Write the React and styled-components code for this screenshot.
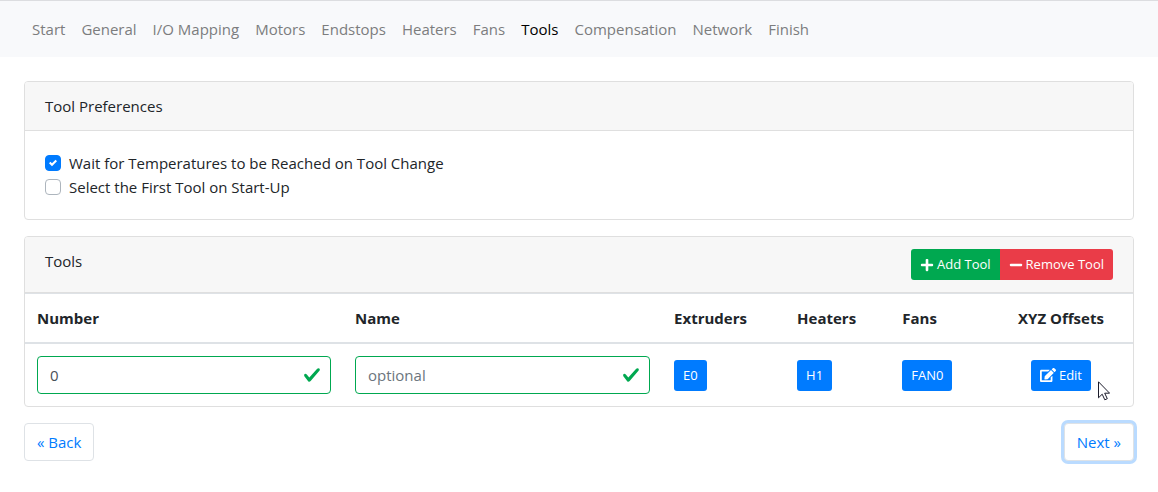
import React, { useState } from 'react'
import styled, { createGlobalStyle } from 'styled-components'
import { FaEdit, FaMinus, FaPlus } from 'react-icons/fa'

const steps = ['Start', 'General', 'I/O Mapping', 'Motors', 'Endstops', 'Heaters', 'Fans', 'Tools', 'Compensation', 'Network', 'Finish']

const CheckOption = ({ id, label, checked, onChange }) => (
    <Option>
        <Box>
            <input id={id} type="checkbox" checked={checked} onChange={(e) => onChange(e.target.checked)} />
            {checked && (
                <svg viewBox="0 0 8 8" aria-hidden="true">
                    <path fill="#fff" d="M6.564.75l-3.59 3.612-1.538-1.55L0 4.26 2.974 7.25 8 2.193z" />
                </svg>
            )}
        </Box>
        <label htmlFor={id}>{label}</label>
    </Option>
)

const ValidInput = (props) => (
    <Field>
        <input {...props} />
        <svg viewBox="0 0 8 8" aria-hidden="true">
            <path fill="#00a850" d="M2.3 6.73L.6 4.53c-.4-1.04.46-1.4 1.1-.8l1.1 1.4 3.4-3.8c.6-.63 1.6-.27 1.2.7l-4 4.6c-.43.5-.8.4-1.1.1z" />
        </svg>
    </Field>
)

const App = () => {
    const [wait, setWait] = useState(true)
    const [selectFirst, setSelectFirst] = useState(false)
    const [number, setNumber] = useState('0')
    const [name, setName] = useState('')

    return (
        <>
            <GlobalStyle />
            <Nav>
                {steps.map((step) => (
                    <NavLink key={step} href="#" $active={step === 'Tools'}>{step}</NavLink>
                ))}
            </Nav>
            <Main>
                <Card>
                    <CardHeader>Tool Preferences</CardHeader>
                    <CardBody>
                        <CheckOption id="wait" label="Wait for Temperatures to be Reached on Tool Change" checked={wait} onChange={setWait} />
                        <CheckOption id="first" label="Select the First Tool on Start-Up" checked={selectFirst} onChange={setSelectFirst} />
                    </CardBody>
                </Card>
                <Card>
                    <CardHeader>
                        <span>Tools</span>
                        <ButtonGroup>
                            <SmallButton $color="#00a850"><FaPlus />Add Tool</SmallButton>
                            <SmallButton $color="#ea3c48"><FaMinus />Remove Tool</SmallButton>
                        </ButtonGroup>
                    </CardHeader>
                    <Table>
                        <colgroup>
                            <Col $width="28.7%" />
                            <Col $width="28.8%" />
                            <Col $width="11.1%" />
                            <Col $width="9.5%" />
                            <Col $width="8.9%" />
                            <Col $width="13%" />
                        </colgroup>
                        <thead>
                            <tr>
                                <th>Number</th>
                                <th>Name</th>
                                <th>Extruders</th>
                                <th>Heaters</th>
                                <th>Fans</th>
                                <th>XYZ Offsets</th>
                            </tr>
                        </thead>
                        <tbody>
                            <tr>
                                <td><ValidInput aria-label="Number" value={number} onChange={(e) => setNumber(e.target.value)} /></td>
                                <td><ValidInput aria-label="Name" placeholder="optional" value={name} onChange={(e) => setName(e.target.value)} /></td>
                                <td><SmallButton>E0</SmallButton></td>
                                <td><SmallButton>H1</SmallButton></td>
                                <td><SmallButton>FAN0</SmallButton></td>
                                <td>
                                    <EditCell>
                                        <SmallButton $icon="16px"><FaEdit />Edit</SmallButton>
                                        <Pointer viewBox="0 0 12 20" aria-hidden="true">
                                            <path fill="#fff" stroke="#1b1b2b" d="M.5.8v16l3.7-3.6 2.6 5.6 2.5-1.1-2.6-5.5h4.9z" />
                                        </Pointer>
                                    </EditCell>
                                </td>
                            </tr>
                        </tbody>
                    </Table>
                </Card>
                <Footer>
                    <PageButton>« Back</PageButton>
                    <PageButton $focused>Next »</PageButton>
                </Footer>
            </Main>
        </>
    )
}
export default App

const GlobalStyle = createGlobalStyle`
    *{
        box-sizing: border-box;
    }
    body{
        margin: 0;
        background-color: #fff;
        color: #212529;
        font-family: "Open Sans", "Noto Sans", sans-serif;
        font-size: 15px;
        line-height: 24px;
    }
    button, input{
        font: inherit;
    }
`

const Nav = styled.nav`
    display: flex;
    padding: 8px 24px;
    border-top: 1px solid #dcdde0;
    background-color: #f8f9fb;
`

const NavLink = styled.a`
    padding: 8px;
    color: ${({ $active }) => ($active ? '#000' : '#7c7d7e')};
    text-decoration: none;
    white-space: nowrap;
`

const Main = styled.main`
    display: flex;
    flex-direction: column;
    gap: 16px;
    padding: 24px;
`

const Card = styled.section`
    border: 1px solid #dfdfdf;
    border-radius: 4px;
    background-color: #fff;
`

const CardHeader = styled.header`
    display: flex;
    justify-content: space-between;
    align-items: flex-start;
    padding: 12px 20px;
    border-bottom: 1px solid #dfdfdf;
    border-radius: 3px 3px 0 0;
    background-color: #f7f7f7;
`

const CardBody = styled.div`
    padding: 20px;
`

const Option = styled.div`
    display: flex;
    align-items: center;
    gap: 8px;
`

const Box = styled.span`
    display: grid;
    place-items: center;

    input, svg{
        grid-area: 1 / 1;
    }
    input{
        width: 16px;
        height: 16px;
        margin: 0;
        appearance: none;
        border: 1px solid #adb5bd;
        border-radius: 4px;
        background-color: #fff;
    }
    input:checked{
        border-color: #007bff;
        background-color: #007bff;
    }
    svg{
        width: 8px;
        height: 8px;
        pointer-events: none;
    }
`

const ButtonGroup = styled.div`
    display: flex;

    button:first-child{
        border-radius: 3px 0 0 3px;
    }
    button:last-child{
        border-radius: 0 3px 3px 0;
    }
`

const SmallButton = styled.button`
    display: inline-flex;
    align-items: center;
    gap: 3px;
    padding: 5px 9px;
    border: 0;
    border-radius: 3px;
    background-color: ${({ $color }) => $color || '#007bff'};
    color: #fff;
    font-size: 13px;
    line-height: 21px;
    white-space: nowrap;
    cursor: pointer;

    svg{
        font-size: ${({ $icon }) => $icon || '14px'};
    }
`

const Table = styled.table`
    width: 100%;
    table-layout: fixed;
    border-spacing: 0;

    th{
        padding: 12px;
        border-top: 1px solid #dee2e6;
        border-bottom: 2px solid #dee2e6;
        font-weight: 700;
        text-align: left;
        white-space: nowrap;
    }
    td{
        padding: 12px;
        vertical-align: middle;
    }
    th:last-child, td:last-child{
        text-align: center;
    }
    td > button{
        vertical-align: middle;
    }
`

const Col = styled.col`
    width: ${({ $width }) => $width};
`

const Field = styled.div`
    display: grid;
    align-items: center;

    input, svg{
        grid-area: 1 / 1;
    }
    input{
        width: 100%;
        height: 38px;
        padding: 6px 36px 6px 12px;
        border: 1px solid #00a850;
        border-radius: 4px;
        background-color: #fff;
        color: #495057;
    }
    input::placeholder{
        color: #6c757d;
    }
    svg{
        width: 18px;
        height: 18px;
        margin-right: 10px;
        justify-self: end;
        pointer-events: none;
    }
`

const EditCell = styled.div`
    display: inline-flex;
    position: relative;
    vertical-align: middle;
`

const Pointer = styled.svg`
    position: absolute;
    top: 21px;
    left: calc(100% + 7px);
    width: 12px;
    height: 20px;
    pointer-events: none;
`

const Footer = styled.footer`
    display: flex;
    justify-content: space-between;
`

const PageButton = styled.button`
    padding: 6px 12px;
    border: 1px solid #dee2e6;
    border-radius: 4px;
    background-color: #fff;
    color: #007bff;
    box-shadow: ${({ $focused }) => ($focused ? '0 0 0 3px #badbff' : 'none')};
    white-space: nowrap;
    cursor: pointer;
`
